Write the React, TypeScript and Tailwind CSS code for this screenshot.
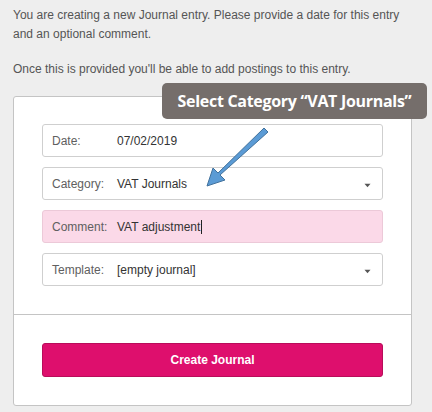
import React from "react";

function Caret() {
  return (
    <svg width="7" height="5" viewBox="0 0 7 5" className="absolute right-[11px] top-[15px]">
      <path d="M0.5 0.8 L6.5 0.8 L3.5 4.3 Z" fill="#555" />
    </svg>
  );
}

function Field({
  label,
  value,
  pink,
  select,
  cursor,
}: {
  label: string;
  value: string;
  pink?: boolean;
  select?: boolean;
  cursor?: boolean;
}) {
  return (
    <div
      className={
        "relative flex h-[33px] items-center rounded-[3px] border pl-[9px] text-[12px] " +
        (pink ? "border-[#ecc9d8] bg-[#fbd9e8]" : "border-[#cfcfcf] bg-white")
      }
    >
      <span className="w-[65px] shrink-0 text-[#606060]">{label}</span>
      <span className="flex items-center text-[#333]">
        {value}
        {cursor && <span className="ml-px inline-block h-[14px] w-px bg-[#222]" />}
      </span>
      {select && <Caret />}
    </div>
  );
}

export default function App() {
  return (
    <div
      className="relative min-h-[412px] w-[432px] bg-[#eeeeee] px-[13px] pt-[6px]"
      style={{ fontFamily: '"Liberation Sans", Arial, sans-serif' }}
    >
      <p className="text-[12px] leading-[19px] text-[#555]">
        You are creating a new Journal entry. Please provide a date for this entry and an optional comment.
      </p>
      <p className="mt-[16px] text-[12px] leading-[19px] text-[#555]">
        Once this is provided you'll be able to add postings to this entry.
      </p>

      <div className="mt-[17px] w-[399px] rounded-[3px] border border-[#c4c4c4] bg-white">
        <div className="flex flex-col gap-[10px] px-[28px] pb-[28px] pt-[27px]">
          <Field label="Date:" value="07/02/2019" />
          <Field label="Category:" value="VAT Journals" select />
          <Field label="Comment:" value="VAT adjustment" pink cursor />
          <Field label="Template:" value="[empty journal]" select />
        </div>
        <div className="border-t border-[#c4c4c4] px-[28px] pb-[28px] pt-[28px]">
          <button className="flex h-[34px] w-full items-center justify-center rounded-[3px] border border-[#b80d5a] bg-[#de0f6d] text-[12px] font-bold text-white">
            Create Journal
          </button>
        </div>
      </div>

      <div
        className="absolute left-[162px] top-[83px] flex h-[36px] w-[265px] items-center justify-center rounded-[5px] bg-[#756e6b] text-[16px] font-bold text-white"
        style={{ fontFamily: '"Open Sans", "Noto Sans", sans-serif', letterSpacing: "-0.3px" }}
      >
        Select Category “VAT Journals”
      </div>

      <svg
        className="absolute left-[200px] top-[122px]"
        width="72"
        height="72"
        viewBox="0 0 72 72"
      >
        <path
          d="M68 10 L64 6 L18 51 L13 46 L7 64 L25 58 L20 53 Z"
          fill="#5b9bd5"
          stroke="#41719c"
          strokeWidth="1"
          strokeLinejoin="round"
        />
      </svg>
    </div>
  );
}
